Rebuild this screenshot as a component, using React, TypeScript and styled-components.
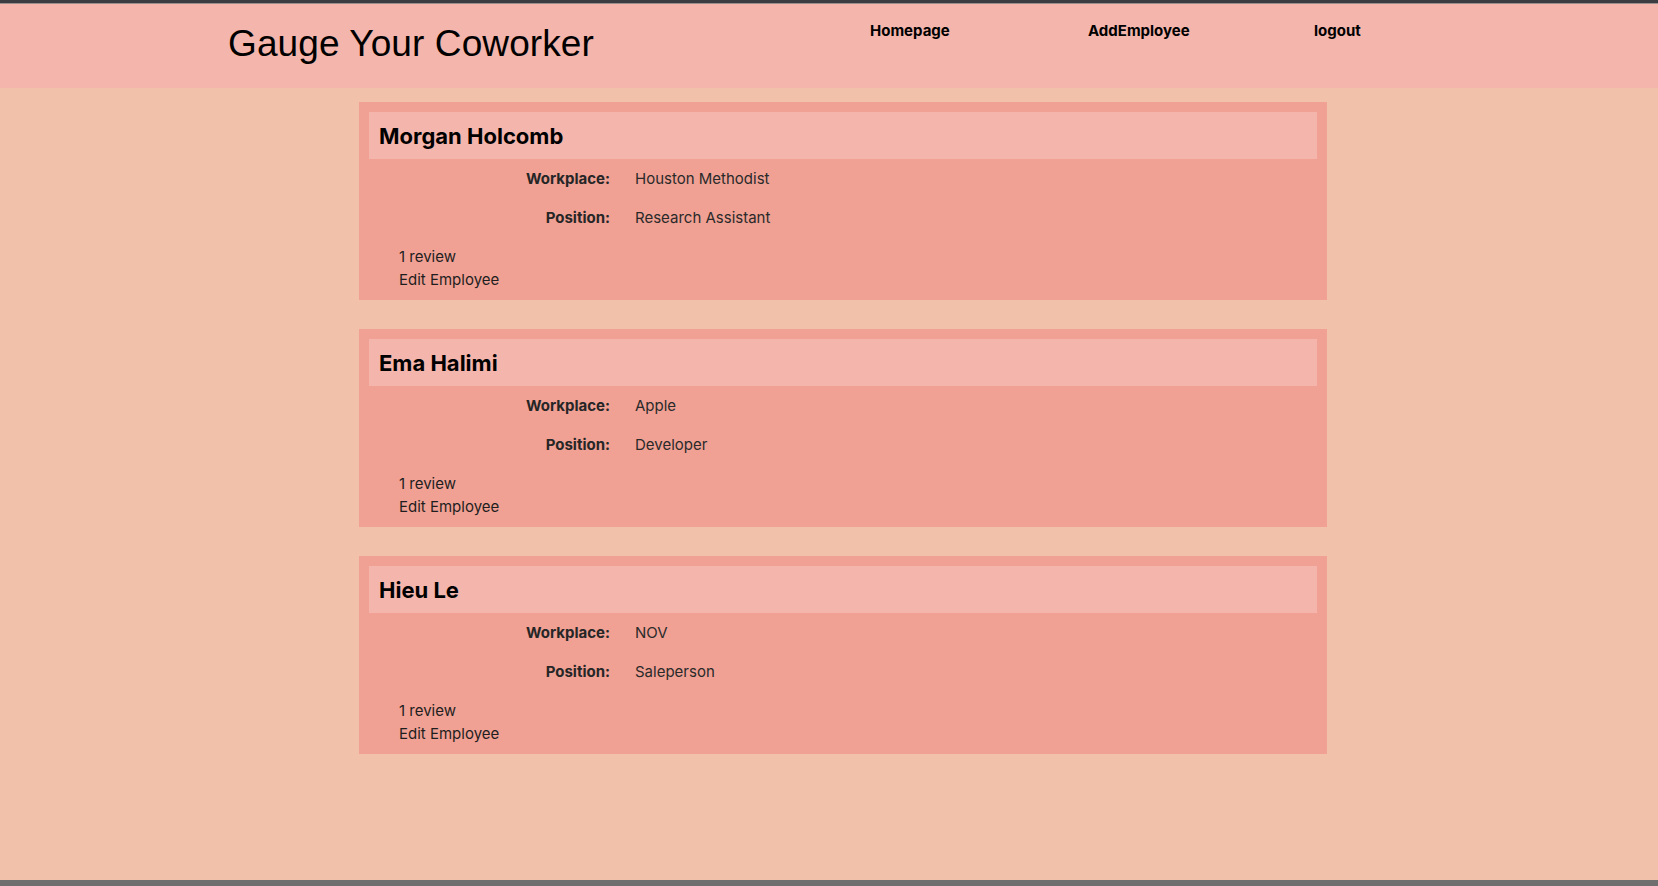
import React from "react";
import styled, { createGlobalStyle } from "styled-components";

const GlobalStyle = createGlobalStyle`
  html, body {
    margin: 0;
    padding: 0;
  }
  body {
    background: #7b7b7b;
    font-family: Inter, "Noto Sans", sans-serif;
    -webkit-font-smoothing: antialiased;
  }
`;

const Frame = styled.div`
  height: 886px;
  box-sizing: border-box;
  border-top: 3px solid #3a3c41;
  padding-bottom: 6px;
  background: linear-gradient(#8a8a8a, #6f6f6f);
  display: flex;
  flex-direction: column;
`;

const Header = styled.header`
  height: 85px;
  box-sizing: border-box;
  border-top: 1px solid #9a8f8d;
  background: #f4b5ac;
  display: flex;
  align-items: flex-start;
  padding: 17px 0 0 228px;
`;

const TitleBox = styled.div`
  width: 642px;
  flex: none;
  padding-top: 4px;
`;

const Title = styled.h1`
  margin: 0;
  font-family: "Liberation Sans", Arial, sans-serif;
  font-weight: 400;
  font-size: 37px;
  letter-spacing: 0.1px;
  line-height: 37px;
  color: #000;
  white-space: nowrap;
`;

const Nav = styled.nav`
  display: grid;
  grid-template-columns: 218px 226px auto;
  padding-top: 1px;
`;

const NavLink = styled.a`
  font-family: Inter, sans-serif;
  font-weight: 700;
  font-size: 15px;
  line-height: 17px;
  color: #000;
  text-decoration: none;
  cursor: pointer;
  white-space: nowrap;
`;

const Page = styled.main`
  flex: 1;
  background: #f1c1aa;
  padding: 14px 0 0 359px;
  display: flex;
  flex-direction: column;
  gap: 29.5px;
`;

const Card = styled.section`
  width: 968px;
  box-sizing: border-box;
  background: #f0a194;
  padding: 10px 10px 9px 10px;
`;

const NameBand = styled.div`
  height: 47px;
  box-sizing: border-box;
  background: #f4b5ac;
  padding-left: 10px;
  display: flex;
  align-items: center;
`;

const Name = styled.h2`
  margin: 0;
  font-family: Inter, sans-serif;
  font-weight: 700;
  font-size: 22px;
  line-height: 26px;
  color: #000;
  padding-top: 1px;
`;

const Details = styled.div`
  padding-top: 10px;
  display: flex;
  flex-direction: column;
  gap: 18.5px;
`;

const Row = styled.div`
  display: grid;
  grid-template-columns: 241px 1fr;
  column-gap: 25px;
  font-size: 15px;
  line-height: 20px;
`;

const Label = styled.span`
  text-align: right;
  font-weight: 700;
  color: #262626;
`;

const Value = styled.span`
  color: #2a2a2a;
`;

const Footer = styled.div`
  padding: 17px 0 0 30px;
  display: flex;
  flex-direction: column;
`;

const FooterLink = styled.a`
  font-size: 15px;
  line-height: 23px;
  color: #1e1e1e;
  text-decoration: none;
  cursor: pointer;
`;

type Employee = { name: string; workplace: string; position: string; reviews: number };

const employees: Employee[] = [
  { name: "Morgan Holcomb", workplace: "Houston Methodist", position: "Research Assistant", reviews: 1 },
  { name: "Ema Halimi", workplace: "Apple", position: "Developer", reviews: 1 },
  { name: "Hieu Le", workplace: "NOV", position: "Saleperson", reviews: 1 },
];

export default function App() {
  return (
    <>
      <GlobalStyle />
      <Frame>
        <Header>
          <TitleBox>
            <Title>Gauge Your Coworker</Title>
          </TitleBox>
          <Nav>
            <NavLink>Homepage</NavLink>
            <NavLink>AddEmployee</NavLink>
            <NavLink>logout</NavLink>
          </Nav>
        </Header>
        <Page>
          {employees.map((e) => (
            <Card key={e.name}>
              <NameBand>
                <Name>{e.name}</Name>
              </NameBand>
              <Details>
                <Row>
                  <Label>Workplace:</Label>
                  <Value>{e.workplace}</Value>
                </Row>
                <Row>
                  <Label>Position:</Label>
                  <Value>{e.position}</Value>
                </Row>
              </Details>
              <Footer>
                <FooterLink>
                  {e.reviews} review{e.reviews === 1 ? "" : "s"}
                </FooterLink>
                <FooterLink>Edit Employee</FooterLink>
              </Footer>
            </Card>
          ))}
        </Page>
      </Frame>
    </>
  );
}
